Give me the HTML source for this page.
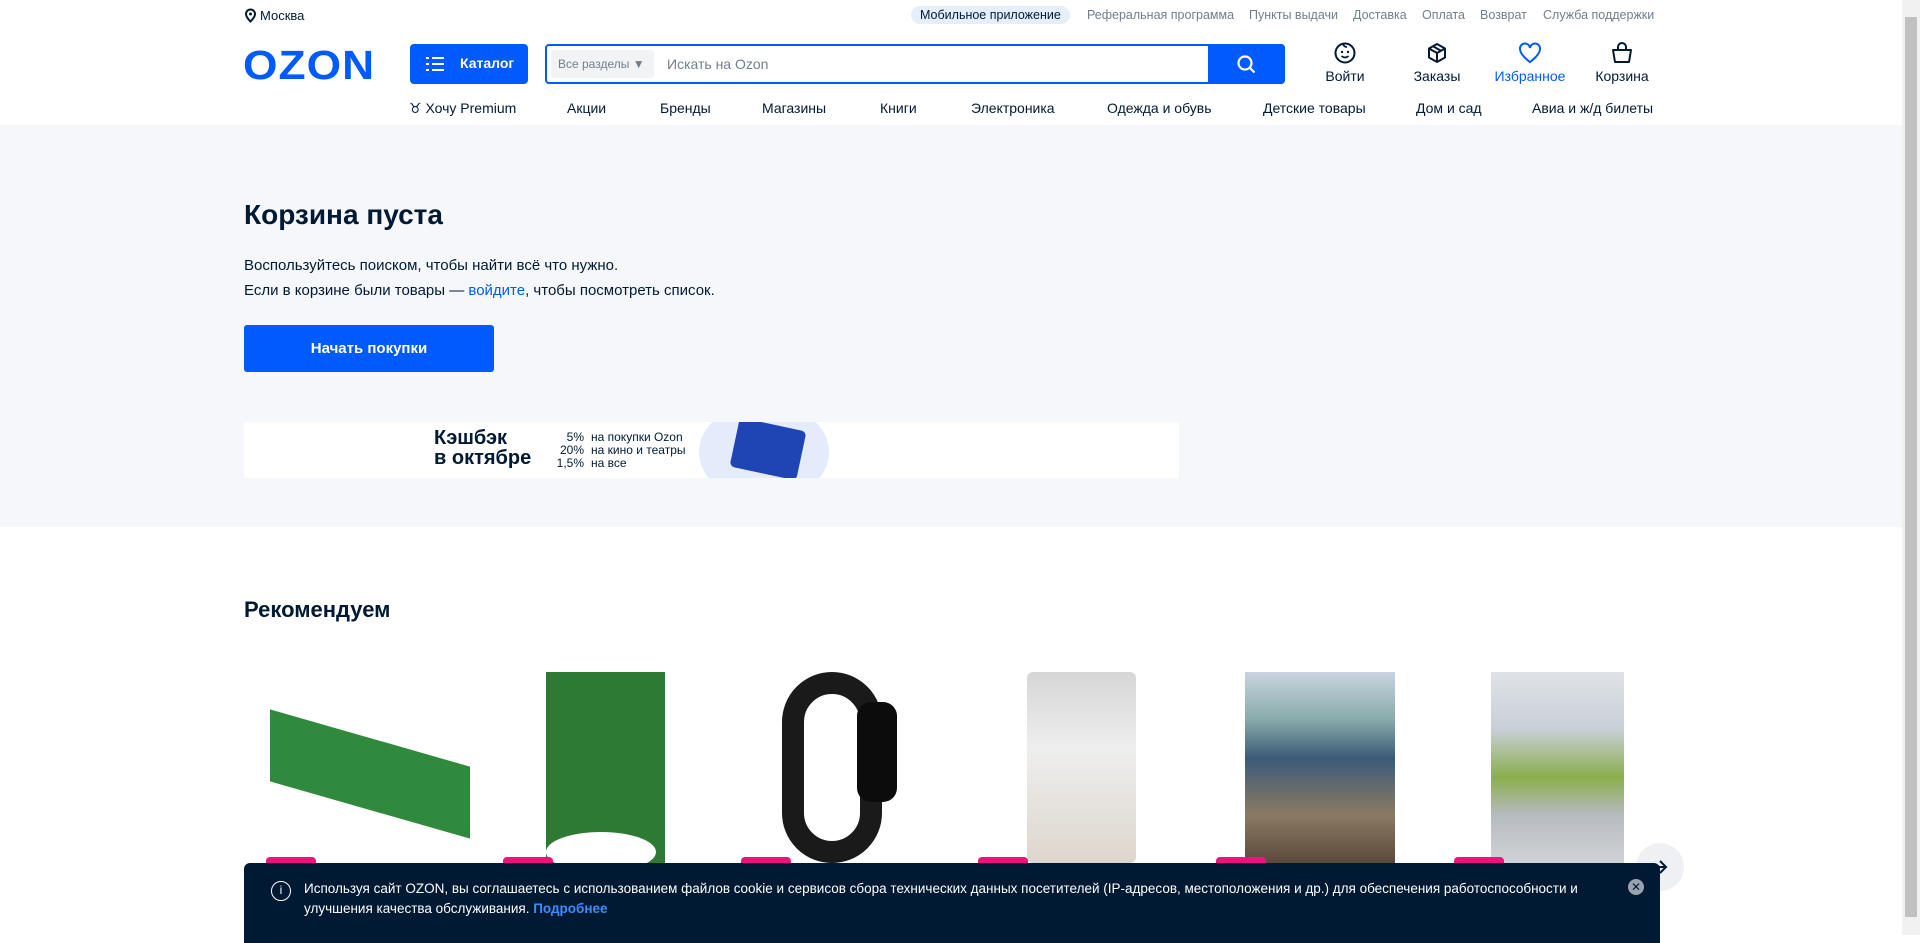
<!DOCTYPE html>
<html><head><meta charset="utf-8"><style>
*{box-sizing:border-box;margin:0;padding:0}
body{width:1920px;height:935px;overflow:hidden;background:#fff;font-family:"Liberation Sans",sans-serif;color:#001a34;position:relative}
.a{position:absolute;white-space:nowrap}
.top{font-size:12.5px;color:#707f8d;top:8px}
.nav{font-size:14px;color:#001a34;top:100px}
.ic{position:absolute;top:42px;width:100px;text-align:center;font-size:14px}
.ic svg{display:block;margin:0 auto 4px}
.badge{position:absolute;top:857px;width:50px;height:20px;background:#f1117e;border-radius:4px}
</style></head><body>
<div class="a" style="left:244px;top:8px;font-size:13px;color:#001a34"><svg width="13" height="15" viewBox="0 0 13 15" style="vertical-align:-3px;margin-right:3px"><path d="M6.5 1.5a4.5 4.5 0 0 1 4.5 4.5c0 3-4.5 7.5-4.5 7.5S2 9 2 6a4.5 4.5 0 0 1 4.5-4.5z" fill="none" stroke="#001a34" stroke-width="2"/><circle cx="6.5" cy="6" r="1.5" fill="#001a34"/></svg>Москва</div>
<div class="a top" style="left:911px;top:6px;background:#e5eefb;color:#001a34;padding:2px 9px;border-radius:10px">Мобильное приложение</div>
<div class="a top" style="left:1087px">Реферальная программа</div>
<div class="a top" style="left:1249px">Пункты выдачи</div>
<div class="a top" style="left:1353px">Доставка</div>
<div class="a top" style="left:1422px">Оплата</div>
<div class="a top" style="left:1480px">Возврат</div>
<div class="a top" style="left:1543px">Служба поддержки</div>
<div class="a" style="left:243px;top:42px;font-size:41px;font-weight:bold;color:#005bff;letter-spacing:1px;transform:scaleX(1.08);transform-origin:left">OZON</div>
<div class="a" style="left:410px;top:44px;width:118px;height:40px;background:#005bff;border-radius:4px;color:#fff;font-size:14px;font-weight:bold;padding:11px 0 0 50px">Каталог
<svg style="position:absolute;left:16px;top:12px" width="18" height="16"><g fill="#fff"><rect x="0" y="1" width="3" height="2"/><rect x="0" y="7" width="3" height="2"/><rect x="0" y="13" width="3" height="2"/><rect x="6" y="1" width="12" height="2"/><rect x="6" y="7" width="12" height="2"/><rect x="6" y="13" width="12" height="2"/></g></svg></div>
<div class="a" style="left:545px;top:44px;width:740px;height:40px;border:2px solid #005bff;border-radius:4px;background:#fff">
<div class="a" style="left:4px;top:4px;width:103px;height:28px;background:#f2f3f5;border-radius:3px;font-size:12px;color:#707f8d;padding:7px 0 0 7px">Все разделы ▼</div>
<div class="a" style="left:120px;top:10px;font-size:14px;color:#707f8d">Искать на Ozon</div>
<div class="a" style="right:-2px;top:-2px;width:77px;height:40px;background:#005bff;border-radius:0 4px 4px 0"><svg style="position:absolute;left:28px;top:10px" width="22" height="22"><circle cx="9" cy="9" r="6.5" fill="none" stroke="#fff" stroke-width="2.2"/><path d="M13.5 13.5l5 5" stroke="#fff" stroke-width="2.2"/></svg></div></div>
<div class="ic" style="left:1295px"><svg width="22" height="22" viewBox="0 0 22 22"><circle cx="11" cy="11" r="9.5" fill="none" stroke="#001a34" stroke-width="2"/><circle cx="8" cy="10" r="1.2" fill="#001a34"/><circle cx="14" cy="10" r="1.2" fill="#001a34"/><path d="M7.5 14q3.5 3 7 0M9 2q1 3 4 3" fill="none" stroke="#001a34" stroke-width="1.8"/></svg>Войти</div>
<div class="ic" style="left:1387px"><svg width="22" height="22" viewBox="0 0 22 22"><path d="M11 2l8 4.5v9L11 20l-8-4.5v-9z M3 6.5L11 11l8-4.5 M11 11v9 M7 4.3l8 4.5" fill="none" stroke="#001a34" stroke-width="2" stroke-linejoin="round"/></svg>Заказы</div>
<div class="ic" style="left:1480px;color:#005bff"><svg width="24" height="22" viewBox="0 0 24 22"><path d="M12 20S2 13 2 7a5 5 0 0 1 10-1 5 5 0 0 1 10 1c0 6-10 13-10 13z" fill="none" stroke="#005bff" stroke-width="2"/></svg>Избранное</div>
<div class="ic" style="left:1572px"><svg width="22" height="22" viewBox="0 0 22 22"><path d="M7 8V5a4 4 0 0 1 8 0v3 M2 8h18l-2 12H4z" fill="none" stroke="#001a34" stroke-width="2" stroke-linejoin="round"/></svg>Корзина</div>
<div class="a nav" style="left:409px">♉︎ Хочу Premium</div>
<div class="a nav" style="left:567px">Акции</div>
<div class="a nav" style="left:660px">Бренды</div>
<div class="a nav" style="left:762px">Магазины</div>
<div class="a nav" style="left:880px">Книги</div>
<div class="a nav" style="left:971px">Электроника</div>
<div class="a nav" style="left:1107px">Одежда и обувь</div>
<div class="a nav" style="left:1263px">Детские товары</div>
<div class="a nav" style="left:1416px">Дом и сад</div>
<div class="a nav" style="left:1532px">Авиа и ж/д билеты</div>
<div class="a" style="left:0;top:125px;width:1902px;height:402px;background:#f5f7fa"></div>
<div class="a" style="left:244px;top:199px;font-size:28px;font-weight:bold">Корзина пуста</div>
<div class="a" style="left:244px;top:253px;font-size:15px;line-height:25px">Воспользуйтесь поиском, чтобы найти всё что нужно.<br>Если в корзине были товары — <span style="color:#005bff">войдите</span>, чтобы посмотреть список.</div>
<div class="a" style="left:244px;top:325px;width:250px;height:47px;background:#005bff;border-radius:3px;color:#fff;font-weight:bold;font-size:15px;text-align:center;line-height:47px">Начать покупки</div>
<div class="a" style="left:244px;top:422px;width:935px;height:56px;background:#fff;overflow:hidden">
<div class="a" style="left:190px;top:6px;font-size:20px;font-weight:bold;line-height:20px">Кэшбэк<br>в октябре</div>
<div class="a" style="left:300px;top:9px;font-size:12px;line-height:13px;text-align:right;width:40px">5%<br>20%<br>1,5%</div>
<div class="a" style="left:347px;top:9px;font-size:12px;line-height:13px">на покупки Ozon<br>на кино и театры<br>на все</div>
<div class="a" style="left:455px;top:-10px;width:130px;height:80px;background:#e4ecfc;border-radius:40px"></div>
<div class="a" style="left:490px;top:2px;width:68px;height:50px;background:#1f45b5;border-radius:5px;transform:rotate(12deg)"></div>
</div>
<div class="a" style="left:244px;top:597px;font-size:22px;font-weight:bold">Рекомендуем</div>
<div class="a" style="left:270px;top:738px;width:200px;height:72px;background:#2f8a3e;transform:skewY(16deg);"></div>
<div class="a" style="left:546px;top:672px;width:119px;height:191px;background:#2d7a35"><div style="background:#fff;height:40px;width:110px;margin-top:160px;border-radius:50%"></div></div>
<div class="a" style="left:782px;top:672px;width:128px;height:191px"><div style="position:absolute;left:0;top:0;width:100px;height:191px;border:22px solid #1a1a1a;border-radius:50px"></div><div style="position:absolute;left:75px;top:30px;width:40px;height:100px;background:#0c0c0c;border-radius:14px"></div></div>
<div class="a" style="left:1027px;top:672px;width:109px;height:191px;background:linear-gradient(#d6d6d6,#eee 40%,#ddd6cc);border-radius:6px"></div>
<div class="a" style="left:1245px;top:672px;width:150px;height:191px;background:linear-gradient(#c9d4e0 0%,#8aa 25%,#3b5a78 45%,#8b7a63 75%,#5a4a3a)"></div>
<div class="a" style="left:1491px;top:672px;width:133px;height:191px;background:linear-gradient(#dfe3e8 0%,#c8cfd6 30%,#8cae4d 55%,#b6bbc0 75%,#cfd3d6)"></div>
<div class="badge" style="left:266px"></div><div class="badge" style="left:503px"></div><div class="badge" style="left:741px"></div><div class="badge" style="left:978px"></div><div class="badge" style="left:1216px"></div><div class="badge" style="left:1454px"></div>
<div class="a" style="left:1636px;top:843px;width:48px;height:48px;border-radius:50%;background:#eef0f3"><svg style="position:absolute;left:14px;top:14px" width="20" height="20"><path d="M3 10h13M10 4l6 6-6 6" fill="none" stroke="#001a34" stroke-width="2"/></svg></div>
<div class="a" style="left:244px;top:863px;width:1416px;height:80px;background:#001a34;border-radius:6px 6px 0 0;color:#fff;font-size:13.5px;line-height:20px">
<div class="a" style="left:27px;top:18px;width:20px;height:20px;border:1.5px solid #fff;border-radius:50%;font-size:12px;text-align:center;line-height:17px">i</div>
<div class="a" style="left:60px;top:16px">Используя сайт OZON, вы соглашаетесь с использованием файлов cookie и сервисов сбора технических данных посетителей (IP-адресов, местоположения и др.) для обеспечения работоспособности и<br>улучшения качества обслуживания. <span style="color:#3d8dff;font-weight:bold">Подробнее</span></div>
<div class="a" style="left:1384px;top:16px;width:16px;height:16px;border-radius:50%;background:#9aa3ad;color:#001a34;font-size:12px;text-align:center;line-height:16px">✕</div>
</div>
<div class="a" style="left:1902px;top:0;width:18px;height:935px;background:#f1f1f1"><div style="margin:17px 3px;height:900px;background:#c1c1c1"></div></div>
</body></html>
